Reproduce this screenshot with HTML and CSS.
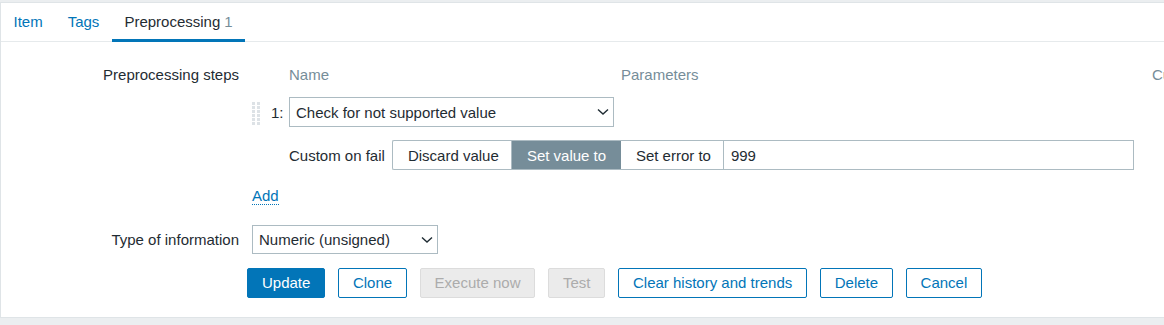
FILE: index.html
```html
<!DOCTYPE html>
<html>
<head>
<meta charset="utf-8">
<link rel="stylesheet" href="styles.css">
</head>
<body>
<div class="panel">
  <nav class="tabs">
    <a class="tab">Item</a>
    <a class="tab">Tags</a>
    <a class="tab active">Preprocessing <span class="count">1</span></a>
  </nav>
  <div class="form">
    <div class="label label-top">Preprocessing steps</div>
    <div class="steps">
      <div class="steps-head">
        <span></span>
        <span>Name</span>
        <span>Parameters</span>
        <span>Custom on fail</span>
      </div>
      <div class="step-row">
        <span class="handle">
          <svg width="9" height="24" viewBox="0 0 9 24">
            <g fill="#dde2e6">
              <rect x="0" y="0" width="3" height="3"/><rect x="5" y="0" width="3" height="3"/>
              <rect x="0" y="4" width="3" height="3"/><rect x="5" y="4" width="3" height="3"/>
              <rect x="0" y="8" width="3" height="3"/><rect x="5" y="8" width="3" height="3"/>
              <rect x="0" y="12" width="3" height="3"/><rect x="5" y="12" width="3" height="3"/>
              <rect x="0" y="16" width="3" height="3"/><rect x="5" y="16" width="3" height="3"/>
              <rect x="0" y="20" width="3" height="3"/><rect x="5" y="20" width="3" height="3"/>
            </g>
          </svg>
        </span>
        <span class="num">1:</span>
        <div class="select select-name">
          <span>Check for not supported value</span>
          <svg class="chev" width="12" height="8" viewBox="0 0 12 8"><path d="M1 1.5 L6 6 L11 1.5" fill="none" stroke="#1f2c33" stroke-width="1.4"/></svg>
        </div>
      </div>
      <div class="fail-row">
        <span class="fail-label">Custom on fail</span>
        <div class="segmented">
          <span class="seg">Discard value</span>
          <span class="seg selected">Set value to</span>
          <span class="seg">Set error to</span>
        </div>
        <div class="value">999</div>
      </div>
      <div class="add-row"><a class="add">Add</a></div>
    </div>
    <div class="label label-mid">Type of information</div>
    <div class="field">
      <div class="select select-type">
        <span>Numeric (unsigned)</span>
        <svg class="chev" width="12" height="8" viewBox="0 0 12 8"><path d="M1 1.5 L6 6 L11 1.5" fill="none" stroke="#1f2c33" stroke-width="1.4"/></svg>
      </div>
    </div>
    <div></div>
    <div class="actions">
      <button class="btn primary">Update</button>
      <button class="btn">Clone</button>
      <button class="btn disabled">Execute now</button>
      <button class="btn disabled">Test</button>
      <button class="btn">Clear history and trends</button>
      <button class="btn">Delete</button>
      <button class="btn">Cancel</button>
    </div>
  </div>
</div>
</body>
</html>
```

FILE: styles.css
```css
html, body {
  margin: 0;
  padding: 0;
  background: #ebeef0;
  font-family: "Liberation Sans", Arial, sans-serif;
  font-size: 15px;
  color: #1f2c33;
}

.panel {
  margin-top: 2px;
  height: 316px;
  box-sizing: border-box;
  background: #fff;
  border: 1px solid #dfe4e7;
  border-right: none;
  overflow: hidden;
}

.tabs {
  display: flex;
  height: 38px;
  border-bottom: 1px solid #e6eaec;
}

.tab {
  display: flex;
  align-items: center;
  padding: 0 12.5px 2px 12.5px;
  color: #0275b8;
  cursor: pointer;
}

.tab.active {
  color: #1f2c33;
  border-bottom: 3px solid #0275b8;
  margin-bottom: -1px;
  padding: 0 12px 0 12.5px;
}

.count {
  color: #768d99;
  margin-left: 4px;
}

.form {
  display: grid;
  grid-template-columns: 238px 1fr;
  column-gap: 13px;
  padding-top: 24px;
}

.label {
  text-align: right;
  line-height: 18px;
  white-space: nowrap;
}

.label-mid {
  align-self: center;
  margin-top: 20px;
}

.steps {
  display: flex;
  flex-direction: column;
  min-width: 0;
}

.steps-head {
  display: grid;
  grid-template-columns: 37px 332px 531px max-content;
  line-height: 18px;
  color: #768d99;
  white-space: nowrap;
}

.step-row {
  display: flex;
  align-items: center;
  margin-top: 13px;
  height: 30px;
}

.handle {
  width: 19px;
  display: flex;
  align-items: center;
  padding-top: 3px;
}

.num {
  width: 18px;
}

.select {
  display: flex;
  align-items: center;
  justify-content: space-between;
  box-sizing: border-box;
  height: 30px;
  border: 1px solid #acbbc2;
  background: #fff;
  padding: 0 4px 0 6px;
  white-space: nowrap;
}

.select-name {
  width: 325px;
}

.select-type {
  width: 186px;
  height: 29px;
}

.chev {
  flex: none;
}

.fail-row {
  display: flex;
  align-items: center;
  margin-top: 13px;
  margin-left: 37px;
  height: 30px;
}

.fail-label {
  margin-right: 7px;
  white-space: nowrap;
}

.segmented {
  display: flex;
  height: 30px;
  box-sizing: border-box;
  border: 1px solid #acbbc2;
  border-right: none;
  border-radius: 2px 0 0 2px;
}

.seg {
  display: flex;
  align-items: center;
  padding: 0 14px 0 15px;
  border-right: 1px solid #acbbc2;
  white-space: nowrap;
}

.seg:first-child {
  width: 89px;
}

.seg.selected {
  background: #768d99;
  color: #fff;
  border-right-color: #768d99;
  width: 79px;
}

.seg:nth-child(3) {
  width: 73px;
}

.value {
  display: flex;
  align-items: center;
  box-sizing: border-box;
  width: 410px;
  height: 30px;
  border: 1px solid #acbbc2;
  border-left: none;
  padding-left: 7px;
}

.add-row {
  margin-top: 17px;
  line-height: 18px;
}

.add {
  color: #0275b8;
  border-bottom: 1px dotted #0275b8;
  cursor: pointer;
}

.field {
  margin-top: 20px;
}

.actions {
  display: flex;
  gap: 12.5px;
  margin-top: 14px;
  margin-left: -5px;
}

.btn {
  height: 30px;
  box-sizing: border-box;
  padding: 0 14px 1px;
  border: 1px solid #0275b8;
  border-radius: 2px;
  background: #fff;
  color: #0275b8;
  font-family: "Liberation Sans", Arial, sans-serif;
  font-size: 15px;
  white-space: nowrap;
}

.btn.primary {
  background: #0275b8;
  color: #fff;
}

.btn.disabled {
  background: #ebebeb;
  border-color: #dcdcdc;
  color: #acacac;
}
```
